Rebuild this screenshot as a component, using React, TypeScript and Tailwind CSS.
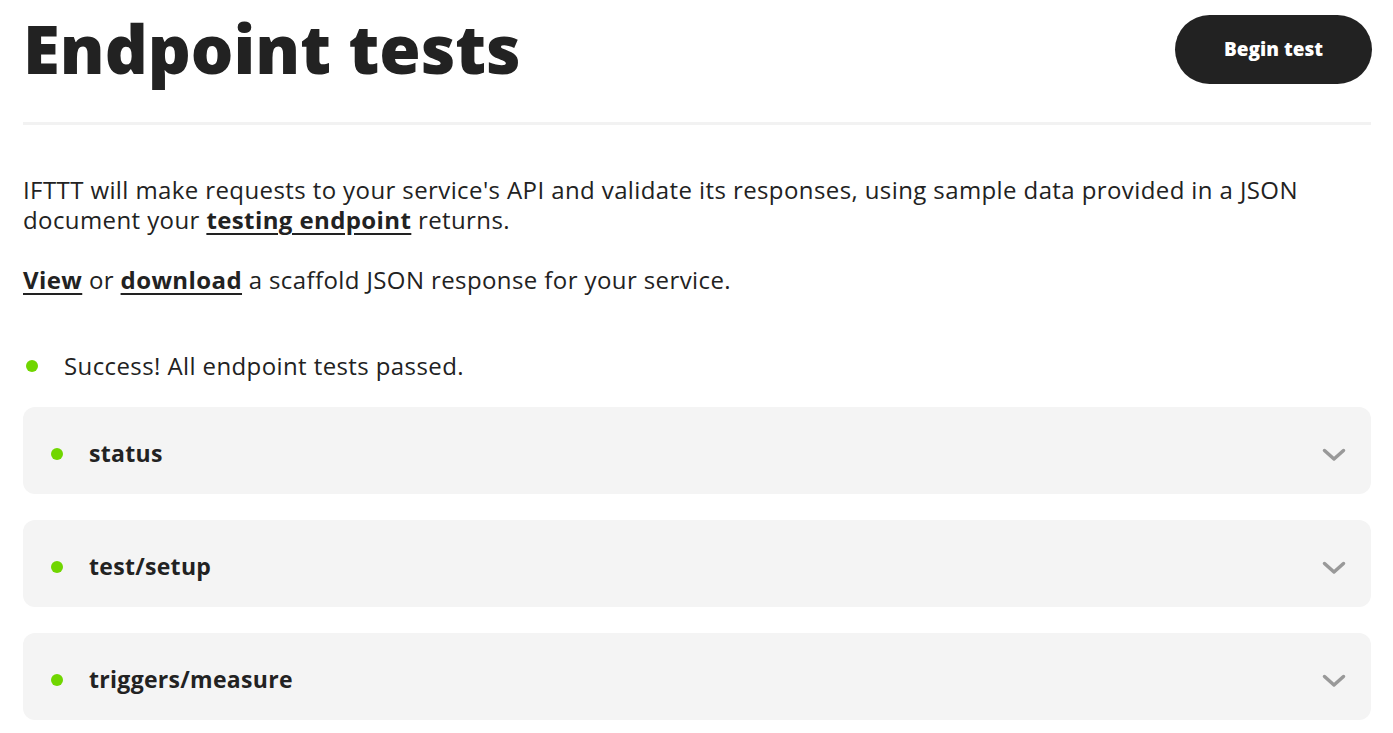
import React from 'react';

const font = { fontFamily: '"Open Sans", "Noto Sans", sans-serif' };

const endpoints = ['status', 'test/setup', 'triggers/measure'];

// Chevron used on the collapsed endpoint rows
const Chevron = () => (
  <svg width="24" height="14" viewBox="0 0 24 14" fill="none">
    <path d="M2.5 2.5l9.5 8.5 9.5-8.5" stroke="#999" strokeWidth="3.5" strokeLinecap="round" strokeLinejoin="round" />
  </svg>
);

const Dot = () => <span className="block w-3 h-3 rounded-full bg-[#70d600]" />;

export default function App() {
  return (
    <div className="min-h-screen bg-white text-[#222] pl-[23px] pr-[22px] pt-[15px]" style={font}>
      {/* Header */}
      <div className="flex items-start justify-between pb-[38px] border-b-[3px] border-[#f2f2f2]">
        <h1 className="text-[67px] leading-[70px] font-extrabold tracking-[0px] mt-[-2px]">Endpoint tests</h1>
        <button className="w-[197px] h-[69px] mr-[-1px] rounded-full bg-[#222] text-white text-[19px] font-extrabold">
          Begin test
        </button>
      </div>

      {/* Intro */}
      <div className="mt-[50px] text-[24px] leading-[30px] tracking-[0.4px]">
        <p>
          IFTTT will make requests to your service's API and validate its responses, using sample data provided in a JSON
          <br />
          document your <a className="font-bold underline underline-offset-4">testing endpoint</a> returns.
        </p>
        <p className="mt-[30px]">
          <a className="font-bold underline underline-offset-4">View</a> or{' '}
          <a className="font-bold underline underline-offset-4">download</a> a scaffold JSON response for your service.
        </p>
      </div>

      {/* Result */}
      <div className="mt-[56px] flex items-center gap-[26px] text-[24px] leading-[30px] tracking-[0.4px] pl-[3px]">
        <Dot />
        <span>Success! All endpoint tests passed.</span>
      </div>

      <div className="mt-[26px] flex flex-col gap-[26px]">
        {endpoints.map((name) => (
          <div key={name} className="h-[87px] rounded-xl bg-[#f4f4f4] flex items-center pt-[6px] pl-[28px] pr-[25px]">
            <Dot />
            <span className="ml-[26px] text-[23px] font-bold tracking-[0.3px]">{name}</span>
            <span className="ml-auto mt-[2px]">
              <Chevron />
            </span>
          </div>
        ))}
      </div>
    </div>
  );
}
